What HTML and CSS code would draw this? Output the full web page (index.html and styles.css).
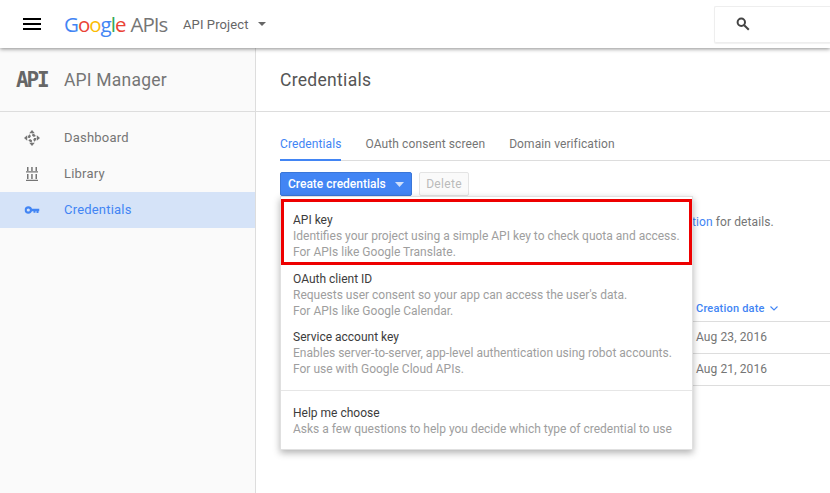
FILE: index.html
```html
<!DOCTYPE html>
<html lang="en">
<head>
<meta charset="utf-8">
<title>Credentials</title>
<link rel="stylesheet" href="styles.css">
</head>
<body>
<header class="topbar">
  <svg class="menu-icon" width="18" height="12" viewBox="0 0 18 12"><path d="M0 0h18v2H0zM0 5h18v2H0zM0 10h18v2H0z" fill="#000"/></svg>
  <div class="logo"><span class="g-blue">G</span><span class="g-red">o</span><span class="g-yellow">o</span><span class="g-blue">g</span><span class="g-green">l</span><span class="g-red">e</span><span class="logo-apis">APIs</span></div>
  <div class="project">API Project</div>
  <svg class="caret" width="8" height="4" viewBox="0 0 8 4"><path d="M0 0h8L4 4z" fill="#666"/></svg>
  <div class="search">
    <svg width="14" height="14" viewBox="0 0 14 14"><circle cx="5.300" cy="5.300" r="3.700" fill="none" stroke="#444" stroke-width="2"/><path d="M8.200 8.200l4.600 4.600" stroke="#444" stroke-width="2"/></svg>
  </div>
</header>
<div class="layout">
  <aside class="sidebar">
    <div class="side-head"><span class="api-mark">API</span><span class="side-title">API Manager</span></div>
    <nav class="side-nav">
      <a class="nav-item">
        <svg class="nav-icon" width="16" height="16" viewBox="0 0 16 16"><path d="M8 0l2.800 3.200H5.200zM8 16l-2.800-3.200h5.600zM0 8l3.200-2.800v5.600zM16 8l-3.200 2.800V5.200z" fill="#757575"/><circle cx="8" cy="8" r="3.200" fill="none" stroke="#757575" stroke-width="2.400" stroke-dasharray="3 2"/></svg>
        <span>Dashboard</span>
      </a>
      <a class="nav-item">
        <svg class="nav-icon" width="12" height="14" viewBox="0 0 12 14"><path d="M1 0h1.500v4H1zM5.200 0h1.500v4H5.200zM9.500 0H11v4H9.500zM0 4.200h12v1.200H0zM1 7h1.500v5H1zM5.200 7h1.500v5H5.200zM9.500 7H11v5H9.500zM0 12.700h12V14H0z" fill="#757575"/></svg>
        <span>Library</span>
      </a>
      <a class="nav-item nav-active">
        <svg class="nav-icon" width="15" height="8" viewBox="0 0 15 8"><circle cx="3.800" cy="4" r="2.700" fill="none" stroke="#4285f4" stroke-width="2.200"/><path d="M6 2.800h9v2.400h-1V7h-2V5.200h-1v1.500H9V5.200H6z" fill="#4285f4"/></svg>
        <span>Credentials</span>
      </a>
    </nav>
  </aside>
  <main class="main">
    <h1 class="page-title">Credentials</h1>
    <div class="content">
      <div class="tabs">
        <a class="tab tab-active">Credentials</a>
        <a class="tab">OAuth consent screen</a>
        <a class="tab">Domain verification</a>
      </div>
      <div class="toolbar">
        <button class="btn-primary">Create credentials<svg width="9" height="5" viewBox="0 0 9 5"><path d="M0 0h9L4.500 5z" fill="#cfdffb"/></svg></button>
        <button class="btn-disabled">Delete</button>
      </div>
      <p class="note"><a>tion</a> for details.</p>
      <div class="table-head"><span class="sort">Creation date</span><svg width="8" height="5" viewBox="0 0 8 5"><path d="M.5.500L4 4l3.500-3.500" fill="none" stroke="#4285f4" stroke-width="1.100"/></svg></div>
      <div class="table-row">Aug 23, 2016</div>
      <div class="table-row table-row-last">Aug 21, 2016</div>
      <div class="dropdown">
        <div class="opt opt-marked"><div class="opt-name">API key</div><div class="opt-desc">Identifies your project using a simple API key to check quota and access.<br>For APIs like Google Translate.</div></div>
        <div class="opt"><div class="opt-name">OAuth client ID</div><div class="opt-desc">Requests user consent so your app can access the user's data.<br>For APIs like Google Calendar.</div></div>
        <div class="opt"><div class="opt-name">Service account key</div><div class="opt-desc">Enables server-to-server, app-level authentication using robot accounts.<br>For use with Google Cloud APIs.</div></div>
        <div class="opt opt-help"><div class="opt-name">Help me choose</div><div class="opt-desc">Asks a few questions to help you decide which type of credential to use</div></div>
      </div>
    </div>
  </main>
</div>
</body>
</html>
```
FILE: styles.css
```css
* { box-sizing: border-box; }
html, body { margin: 0; height: 100%; overflow: hidden; }
body { font-family: Roboto, "Liberation Sans", sans-serif; font-size: 12px; color: #757575; background: #fff; }

.topbar { position: relative; z-index: 2; height: 48px; display: flex; align-items: center; padding-left: 23px; background: #fff; box-shadow: 0 1px 4px rgba(0,0,0,.45); }
.menu-icon { flex: none; }
.logo { margin-left: 23px; width: 119px; font-family: "Open Sans", sans-serif; font-size: 20.500px; letter-spacing: -1px; line-height: 47px; white-space: nowrap; }
.g-blue { color: #4285f4; }
.g-red { color: #ea4335; }
.g-yellow { color: #fbbc05; }
.g-green { color: #34a853; }
.logo-apis { margin-left: 5px; color: #757575; letter-spacing: -1px; }
.project { color: #666; font-size: 13px; letter-spacing: .1px; }
.caret { margin-left: 9px; }
.search { margin-left: auto; width: 116px; height: 37px; display: flex; align-items: center; padding-left: 21px; border: 1px solid #eee; border-right: 0; border-radius: 2px 0 0 2px; box-shadow: 0 1px 1px rgba(0,0,0,.06); }

.layout { display: flex; height: 445px; }
.sidebar { flex: none; width: 256px; background: #fafafa; border-right: 1px solid #ddd; }
.side-head { height: 64px; display: flex; align-items: center; border-bottom: 1px solid #ddd; padding-left: 16px; }
.api-mark { width: 48px; font-family: "DejaVu Sans Mono", monospace; font-weight: 700; font-size: 21px; color: #666; letter-spacing: -2.200px; }
.side-title { padding-top: 1px; font-size: 17.500px; color: #757575; letter-spacing: .2px; }
.side-nav { padding-top: 8px; }
.nav-item { height: 36px; display: flex; align-items: center; position: relative; padding: 0 0 2px 64px; font-size: 13px; color: #757575; letter-spacing: .2px; }
.nav-icon { position: absolute; left: 32px; top: 50%; transform: translate(-50%, -50%); }
.nav-active { background: #d5e3f8; color: #4285f4; }

.main { flex: 1; min-width: 0; }
.page-title { margin: 0; height: 64px; line-height: 65px; padding-left: 24px; border-bottom: 1px solid #ddd; font-size: 17.500px; font-weight: 400; color: #555; letter-spacing: .3px; }
.content { position: relative; padding: 16px 0 0 24px; }
.tabs { display: flex; gap: 24px; height: 33px; border-bottom: 1px solid #ddd; }
.tab { height: 33px; line-height: 33px; font-size: 12px; letter-spacing: .1px; color: #757575; }
.tab-active { color: #4285f4; border-bottom: 2px solid #4285f4; }
.toolbar { display: flex; gap: 7px; margin-top: 11px; }
.btn-primary { width: 132px; height: 24px; display: flex; align-items: center; gap: 9px; padding: 0 0 0 7px; background: #4285f4; border: 1px solid #3a76d8; border-radius: 2px; color: #fff; font: 500 12px Roboto, sans-serif; }
.btn-disabled { width: 50px; height: 24px; padding: 0; background: #fafafa; border: 1px solid #e4e4e4; border-radius: 2px; color: #bbb; font: 12px Roboto, sans-serif; letter-spacing: .3px; }
.note { margin: 18px 0 0 412px; font-size: 12px; line-height: 16px; color: #757575; letter-spacing: .1px; white-space: nowrap; }
.note a { color: #4285f4; }
.table-head { position: relative; margin: 71px 0 6px 416px; height: 14px; display: flex; align-items: center; gap: 5px; font-size: 11px; font-weight: 500; color: #4285f4; letter-spacing: .2px; }
.table-row { position: relative; height: 32px; padding-left: 416px; border-top: 1px solid #ddd; line-height: 31px; font-size: 12px; letter-spacing: .1px; color: #757575; }
.table-row-last { height: 33px; border-bottom: 1px solid #ddd; }
.dropdown { position: absolute; left: 24px; top: 84px; width: 413px; height: 254px; padding: 2px 0 0; background: #fff; border: 1px solid #e0e0e0; box-shadow: 0 3px 7px rgba(0,0,0,.3); }
.opt { height: 58px; padding: 6px 12px 0; }
.opt-marked { height: 66px; padding: 10px 9px 0; border: 3px solid #ee0000; }
.opt-name { font-size: 12px; line-height: 16px; color: #3c3c3c; }
.opt-desc { font-size: 12px; line-height: 16px; color: #9e9e9e; white-space: nowrap; }
.opt-help { height: 60px; margin-top: 9px; padding-top: 14px; border-top: 1px solid #e6e6e6; }
```
